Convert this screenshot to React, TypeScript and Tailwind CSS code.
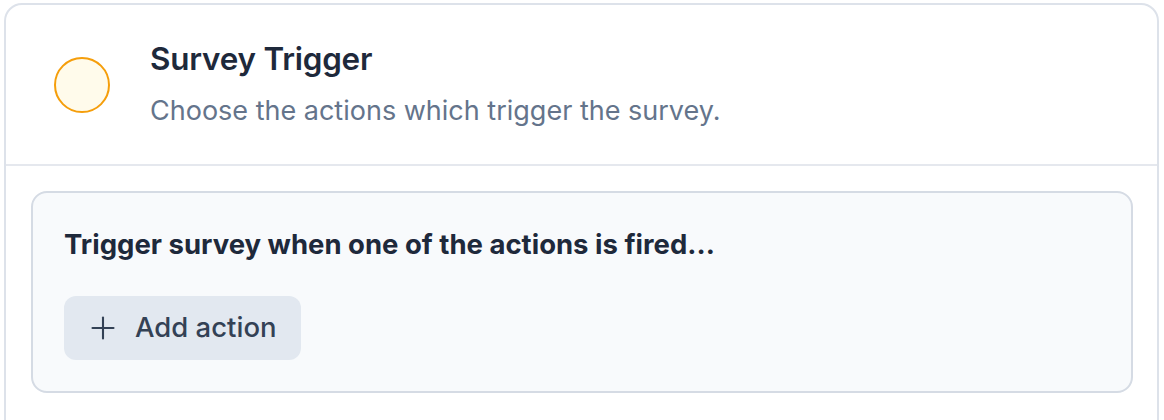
import { Plus } from 'lucide-react';

export default function App() {
  return (
    <div className="min-h-screen bg-white pt-[3px] pl-[4px] font-['Inter',sans-serif] overflow-hidden h-[420px]">
      <div className="w-[1155px] rounded-[18px] border-2 border-[#dde2ea] bg-white h-[440px]">
        <header className="flex items-center gap-[40px] pl-[48px] h-[161px] border-b-2 border-[#e5e8ee]">
          <div className="w-[56px] h-[56px] shrink-0 rounded-full border-2 border-[#f59e0b] bg-[#fffbeb]" />
          <div className="flex flex-col -mt-[1px]">
            <h1 className="text-[31.4px] leading-[40px] font-semibold text-[#1e293b] tracking-[-0.2px]">Survey Trigger</h1>
            <p className="mt-[14px] text-[27px] leading-[36px] text-[#64748b]">Choose the actions which trigger the survey.</p>
          </div>
        </header>

        <div className="pt-[25px] pl-[25px] pr-[24px]">
          <div className="rounded-[16px] border-2 border-[#d5dbe4] bg-[#f8fafc] px-[31px] pt-[31px] pb-[31px]">
            <p className="text-[27.5px] leading-[40px] font-bold text-[#1e293b]">Trigger survey when one of the actions is fired...</p>
            <button className="mt-[32px] flex items-center gap-[14px] h-[64px] rounded-[12px] bg-[#e2e8f0] pl-[21px] pr-[24px] text-[27.5px] font-medium text-[#334155]">
              <Plus size={36} strokeWidth={1.4} />
              Add action
            </button>
          </div>
        </div>
      </div>
    </div>
  );
}
